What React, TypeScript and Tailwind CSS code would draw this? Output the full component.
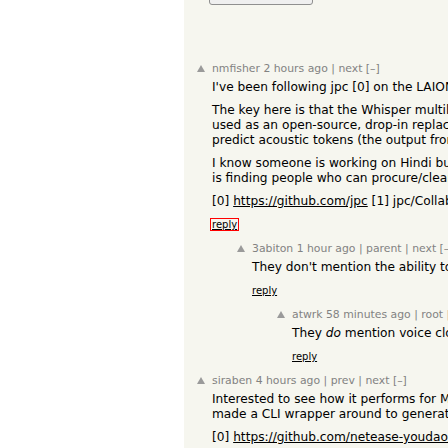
import React from 'react';

type Comment = {
  user: string;
  age: string;
  nav: string[];
  level: number;
  paras: React.ReactNode[][];
  focused?: boolean;
};

const comments: Comment[] = [
  {
    user: 'nmfisher',
    age: '2 hours ago',
    nav: ['next [–]'],
    level: 0,
    focused: true,
    paras: [
      ["I've been following jpc [0] on the LAION discord since he started building this last year, and it's a very impressive project."],
      [
        'The key here is that the Whisper multilingual ASR model has been trained on a huge amount of data, so its encoder output is a',
        'used as an open-source, drop-in replacement for the semantic encoder in model architectures like SPEAR-TTS/VALL-E/etc',
        'predict acoustic tokens (the output from the quantized/low-bandwidth Encodec audio codec) which is then upsampled',
      ],
      [
        'I know someone is working on Hindi but it would be great to see this extended to other languages for a properly open-source',
        'is finding people who can procure/clean/label datasets.',
      ],
      [
        <>
          [0] <a className="underline">https://github.com/jpc</a> [1] jpc/Collabora have went to great pains to ensure that they are only using
        </>,
      ],
    ],
  },
  {
    user: '3abiton',
    age: '1 hour ago',
    nav: ['parent', 'next [–]'],
    level: 1,
    paras: [["They don't mention the ability to fine-tune on a specific voice, or to clone one from a short sample."]],
  },
  {
    user: 'atwrk',
    age: '58 minutes ago',
    nav: ['root', 'parent', 'next [–]'],
    level: 2,
    paras: [
      [
        <>
          They <i>do</i> mention voice cloning in the README, it takes a few seconds of reference audio.
        </>,
      ],
    ],
  },
  {
    user: 'siraben',
    age: '4 hours ago',
    nav: ['prev', 'next [–]'],
    level: 0,
    paras: [
      [
        'Interested to see how it performs for Mandarin Chinese speech synthesis, especially with prosody and emotion. I',
        'made a CLI wrapper around to generate speech from the command line with EmotiVoice [0].',
      ],
      [
        <>
          [0] <a className="underline">https://github.com/netease-youdao/EmotiVoice</a>
        </>,
      ],
    ],
  },
];

function VoteArrow() {
  return (
    <svg width="8" height="7" viewBox="0 0 8 7" className="ml-[1px] mt-[3px]">
      <polygon points="4,0 8,7 0,7" fill="#9a9a9a" />
    </svg>
  );
}

function CommentRow({ c }: { c: Comment }) {
  const indent = c.level === 0 ? 'pl-0' : c.level === 1 ? 'pl-[40px]' : 'pl-[80px]';
  return (
    <div className={`flex ${indent}`}>
      <div className="w-[16px] shrink-0">
        <VoteArrow />
      </div>
      <div className="min-w-0">
        <div className="text-[10.85px] leading-[13px] text-[#828282] whitespace-nowrap">
          {c.user} {c.age}
          {c.nav.map((n) => (
            <span key={n}> | {n}</span>
          ))}
        </div>
        <div className="mt-[5px] text-[12.2px] leading-[15px] text-black">
          {c.paras.map((lines, i) => (
            <div key={i} className={i === 0 ? 'whitespace-nowrap' : 'mt-[8px] whitespace-nowrap'}>
              {lines.map((line, j) => (
                <div key={j}>{line}</div>
              ))}
            </div>
          ))}
        </div>
        <div className="mt-[9px] text-[10px] leading-[13px]">
          <a
            className={
              c.focused
                ? 'underline text-black outline outline-1 outline-[#ff0000] px-[1px] -ml-[1px]'
                : 'underline text-black'
            }
          >
            reply
          </a>
        </div>
      </div>
    </div>
  );
}

export default function App() {
  return (
    <div className="flex h-[448px] w-[448px] overflow-hidden bg-white font-['DejaVu_Sans',Verdana,sans-serif]">
      <div className="w-[184px] shrink-0" />
      <div className="flex-1 bg-[#f6f6ef] min-w-0">
        <div className="pl-[25px]">
          <div className="-mt-[16px] h-[21px] w-[104px] rounded-[3px] border border-[#8f8f8f] bg-[#efefef]" />
        </div>
        <div className="mt-[57px] pl-[12px] flex flex-col gap-[11px]">
          {comments.map((c) => (
            <CommentRow key={c.user} c={c} />
          ))}
        </div>
      </div>
    </div>
  );
}
